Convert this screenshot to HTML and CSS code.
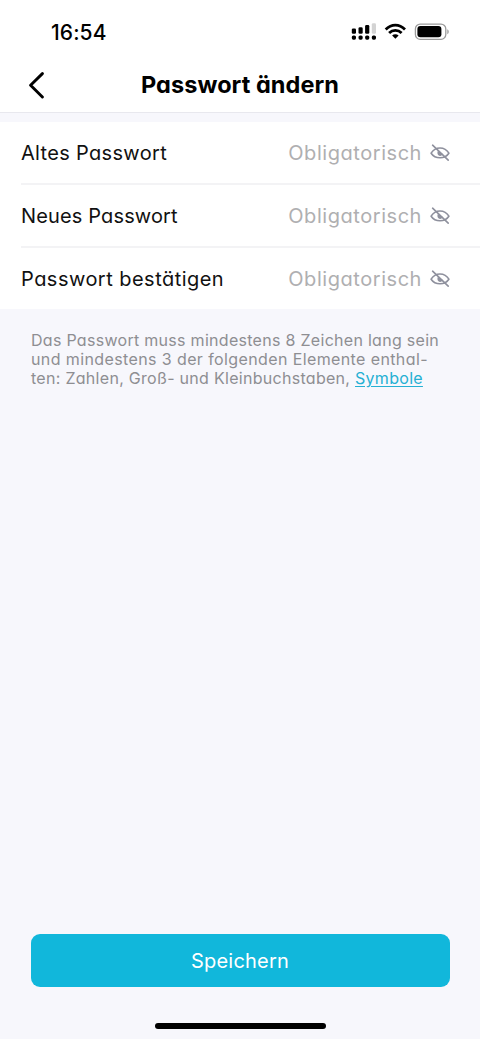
FILE: index.html
```html
<!DOCTYPE html>
<html lang="de">
<head>
<meta charset="utf-8">
<meta name="viewport" content="width=device-width, initial-scale=1">
<title>Passwort ändern</title>
<link rel="stylesheet" href="styles.css">
</head>
<body>
<svg class="defs" aria-hidden="true">
  <symbol id="eye-off" viewBox="0 0 20 18">
    <path d="M1.1 9.2C5.2 2.3 14.8 2.3 18.9 9.2C14.8 15.3 5.2 15.3 1.1 9.2Z" fill="none" stroke="currentColor" stroke-width="1.6" stroke-linejoin="round"/>
    <path d="M7.8 7.1C6.8 10.2 8.2 11.9 10 11.9C11.6 11.9 12.6 11 12.6 9.8Z" fill="currentColor"/>
    <path d="M2.6 1.2L18.2 16.2" fill="none" stroke="currentColor" stroke-width="1.6" stroke-linecap="round"/>
  </symbol>
</svg>
<div class="screen">
  <div class="status">
    <span class="time">16:54</span>
    <svg class="status-icons" width="98" height="20" viewBox="0 0 98 20">
      <rect x="0.8" y="5.4" width="4.2" height="5.4" rx="1.3"/>
      <rect x="7.5" y="4.2" width="4.2" height="6.6" rx="1.3"/>
      <rect x="14.1" y="2" width="4.2" height="8.8" rx="1.3"/>
      <rect x="20.8" y="0.2" width="4.2" height="10.6" rx="1.3" fill="#d3d3d3"/>
      <rect x="0.8" y="12.5" width="4.2" height="4.2" rx="1.6"/>
      <rect x="7.5" y="12.5" width="4.2" height="4.2" rx="1.6"/>
      <rect x="14.1" y="12.5" width="4.2" height="4.2" rx="1.6"/>
      <rect x="20.8" y="12.5" width="4.2" height="4.2" rx="1.6"/>
      <g fill="none" stroke="#000" stroke-width="2.8">
        <path d="M34.7 6.4C40.4 .7 48.3 .7 54 6.4"/>
        <path d="M38.1 9.9C41.6 6.5 47.1 6.5 50.6 9.9"/>
      </g>
      <path d="M41.1 12.4C43 10.7 45.7 10.7 47.6 12.4L44.35 15.8Z"/>
      <rect x="64.4" y="1.1" width="30.4" height="15.2" rx="4.8" fill="none" stroke="#9b9b9b" stroke-width="1.3"/>
      <rect x="66.4" y="3.1" width="24" height="11.2" rx="3"/>
      <path d="M96.3 6.2C98.2 7 98.2 10.4 96.3 11.2Z" fill="#999"/>
    </svg>
  </div>
  <header class="nav">
    <svg class="back" width="20" height="28" viewBox="0 0 20 28"><path d="M15.4 2.6L3.6 14.3L15.4 26" fill="none" stroke="#000" stroke-width="2.9" stroke-linecap="round" stroke-linejoin="round"/></svg>
    <h1 class="title">Passwort ändern</h1>
  </header>
  <main class="form">
    <div class="row"><span class="label label-old">Altes Passwort</span><span class="hint">Obligatorisch</span><svg class="eye"><use href="#eye-off"/></svg></div>
    <div class="row"><span class="label label-new">Neues Passwort</span><span class="hint">Obligatorisch</span><svg class="eye"><use href="#eye-off"/></svg></div>
    <div class="row"><span class="label label-confirm">Passwort bestätigen</span><span class="hint">Obligatorisch</span><svg class="eye"><use href="#eye-off"/></svg></div>
  </main>
  <p class="note"><span class="line">Das Passwort muss mindestens 8 Zeichen lang sein</span><span class="line line-middle">und mindestens 3 der folgenden Elemente enthal-</span><span class="line">ten: Zahlen, Groß- und Kleinbuchstaben, <a class="link">Symbole</a></span></p>
  <footer class="footer">
    <button class="save">Speichern</button>
    <div class="home"></div>
  </footer>
</div>
</body>
</html>
```

FILE: styles.css
```css
* { box-sizing: border-box; }
body { margin: 0; background: #f7f7fc; font-family: Inter, "Liberation Sans", sans-serif; font-feature-settings: "cv11"; color: #111; }
.defs { display: none; }
.screen { display: flex; flex-direction: column; width: 480px; height: 1039px; overflow: hidden; }
.status { display: flex; align-items: center; height: 58px; padding: 6px 31px 0 51px; background: #fff; justify-content: space-between; }
.time { font-size: 21px; font-weight: 550; letter-spacing: 0.1px; color: #000; }
.status-icons { margin-top: 2px; }
.nav { display: grid; grid-template-columns: 60px 1fr 60px; align-items: center; height: 55px; background: #fff; border-bottom: 1px solid #e8e8ee; }
.back { margin-left: 27px; }
.title { margin: 0; font-size: 23.5px; line-height: 30px; font-weight: 750; letter-spacing: 0.06px; text-align: center; color: #000; white-space: nowrap; }
.form { margin-top: 9px; background: #fff; padding-left: 21px; }
.row { display: flex; align-items: center; height: 63px; padding-right: 30px; border-bottom: 2px solid #f3f3f5; }
.row:last-child { height: 61px; border-bottom: 0; }
.label { font-size: 20px; white-space: nowrap; }
.label-old { letter-spacing: 0.32px; }
.label-new { letter-spacing: 0.14px; }
.label-confirm { letter-spacing: 0.47px; }
.hint { margin-left: auto; font-size: 20px; letter-spacing: 0.55px; color: #afafb1; }
.eye { width: 20px; height: 18px; margin-left: 8px; color: #8e909d; }
.note { margin: 22px 0 0 31px; font-size: 16px; line-height: 19px; letter-spacing: 0.29px; color: #8e8e92; }
.line { display: block; white-space: nowrap; }
.line-middle { letter-spacing: 0.39px; }
.link { color: #25b0d3; text-decoration: underline; text-underline-offset: 2px; }
.footer { display: flex; flex-direction: column; align-items: center; margin-top: auto; padding-bottom: 10px; }
.save { width: 419px; height: 53px; border: 0; border-radius: 9px; background: #11b7db; color: #fff; font: inherit; font-size: 20px; letter-spacing: 0.2px; font-feature-settings: "cv11"; }
.home { width: 171px; height: 6px; margin-top: 36px; border-radius: 3px; background: #000; }
```
